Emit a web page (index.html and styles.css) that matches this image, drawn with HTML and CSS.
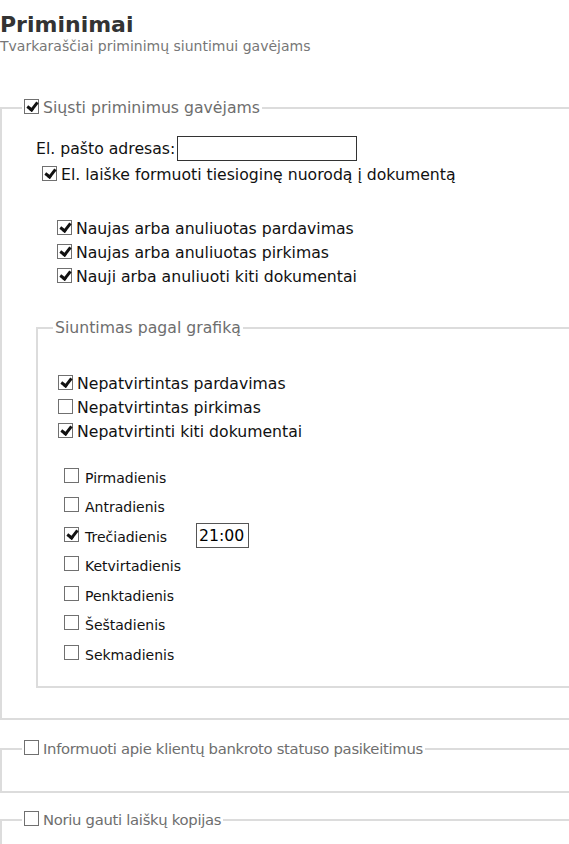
FILE: index.html
```html
<!DOCTYPE html>
<html lang="lt">
<head>
  <meta charset="UTF-8">
  <title>Priminimai</title>
  <link rel="stylesheet" href="styles.css">
</head>
<body>
  <div class="page-head">
    <h1>Priminimai</h1>
    <p class="subtitle">Tvarkaraščiai priminimų siuntimui gavėjams</p>
  </div>

  <fieldset class="group main">
    <legend><label><input type="checkbox" class="cb" checked>Siųsti priminimus gavėjams</label></legend>

    <div class="email-row">
      <label for="email">El. pašto adresas:</label>
      <input type="text" id="email" class="text-input email">
    </div>
    <label class="check-row link-row"><input type="checkbox" class="cb" checked>El. laiške formuoti tiesioginę nuorodą į dokumentą</label>

    <div class="doc-list">
      <label class="check-row"><input type="checkbox" class="cb" checked>Naujas arba anuliuotas pardavimas</label>
      <label class="check-row"><input type="checkbox" class="cb" checked>Naujas arba anuliuotas pirkimas</label>
      <label class="check-row"><input type="checkbox" class="cb" checked>Nauji arba anuliuoti kiti dokumentai</label>
    </div>

    <fieldset class="schedule">
      <legend>Siuntimas pagal grafiką</legend>
      <div class="doc-list">
        <label class="check-row"><input type="checkbox" class="cb" checked>Nepatvirtintas pardavimas</label>
        <label class="check-row"><input type="checkbox" class="cb">Nepatvirtintas pirkimas</label>
        <label class="check-row"><input type="checkbox" class="cb" checked>Nepatvirtinti kiti dokumentai</label>
      </div>
      <div class="days">
        <div class="day"><label><input type="checkbox" class="cb">Pirmadienis</label></div>
        <div class="day"><label><input type="checkbox" class="cb">Antradienis</label></div>
        <div class="day"><label><input type="checkbox" class="cb" checked>Trečiadienis</label><input type="text" class="text-input time" value="21:00"></div>
        <div class="day"><label><input type="checkbox" class="cb">Ketvirtadienis</label></div>
        <div class="day"><label><input type="checkbox" class="cb">Penktadienis</label></div>
        <div class="day"><label><input type="checkbox" class="cb">Šeštadienis</label></div>
        <div class="day"><label><input type="checkbox" class="cb">Sekmadienis</label></div>
      </div>
    </fieldset>
  </fieldset>

  <fieldset class="group short">
    <legend><label><input type="checkbox" class="cb">Informuoti apie klientų bankroto statuso pasikeitimus</label></legend>
  </fieldset>

  <fieldset class="group short">
    <legend><label><input type="checkbox" class="cb">Noriu gauti laiškų kopijas</label></legend>
  </fieldset>
</body>
</html>
```

FILE: styles.css
```css
body {
  margin: 0;
  font-family: "DejaVu Sans", Verdana, sans-serif;
  color: #111;
  background: #fff;
  overflow-x: hidden;
}
.page-head h1 {
  margin: 0;
  padding-top: 12px;
  font-size: 22px;
  line-height: 26px;
  color: #333;
}
.subtitle {
  margin: 0;
  font-size: 14px;
  line-height: 16px;
  color: #777;
}

.cb {
  appearance: none;
  -webkit-appearance: none;
  box-sizing: border-box;
  width: 15px;
  height: 15px;
  margin: 0 4px 0 0;
  border: 1px solid #707070;
  background: #fff;
  position: relative;
  vertical-align: -1px;
}
.cb:checked::after {
  content: "";
  position: absolute;
  left: 4px;
  top: 0;
  width: 4px;
  height: 8px;
  border: solid #111;
  border-width: 0 3px 3px 0;
  transform: rotate(38deg);
}

fieldset {
  margin: 0;
  padding: 0;
  min-width: 0;
}
legend {
  padding: 0 2px;
  font-size: 15.7px;
  line-height: 20px;
  color: #6e6e6e;
}
.group {
  width: 620px;
  box-sizing: border-box;
  border: 2px solid #dcdcdc;
}
.group > legend {
  margin-left: 20px;
}
.main {
  margin-top: 44px;
  padding-bottom: 30px;
}
.short {
  margin-top: 19px;
  height: 54px;
}
.short + .short {
  margin-top: 17px;
}
.short > legend {
  font-size: 14.8px;
  letter-spacing: -0.3px;
}

.text-input {
  box-sizing: border-box;
  height: 25px;
  border: 1px solid #333;
  font-family: inherit;
  font-size: 15.7px;
  padding: 0 2px;
  margin: 0;
}
.email-row {
  display: flex;
  align-items: center;
  margin: 18px 0 0 34px;
  font-size: 15.7px;
}
.email-row label {
  margin-right: 2px;
}
.email {
  width: 180px;
}

.check-row {
  display: block;
  font-size: 15.7px;
  line-height: 24px;
}
.link-row {
  margin: 2px 0 0 40px;
}
.main > .doc-list {
  margin: 30px 0 0 55px;
}

.schedule {
  margin: 29px 0 0 34px;
  border: 2px solid #dcdcdc;
  padding-bottom: 17px;
}
.schedule > legend {
  margin-left: 15px;
}
.schedule .doc-list {
  margin: 34px 0 0 20px;
}
.days {
  margin: 18px 0 0 26px;
  font-size: 14px;
}
.day {
  display: flex;
  align-items: center;
  height: 29.5px;
}
.day .cb {
  margin-right: 6px;
  vertical-align: 0;
}
.day label {
  width: 132px;
}
.time {
  width: 53px;
  border-color: #555;
}
```
